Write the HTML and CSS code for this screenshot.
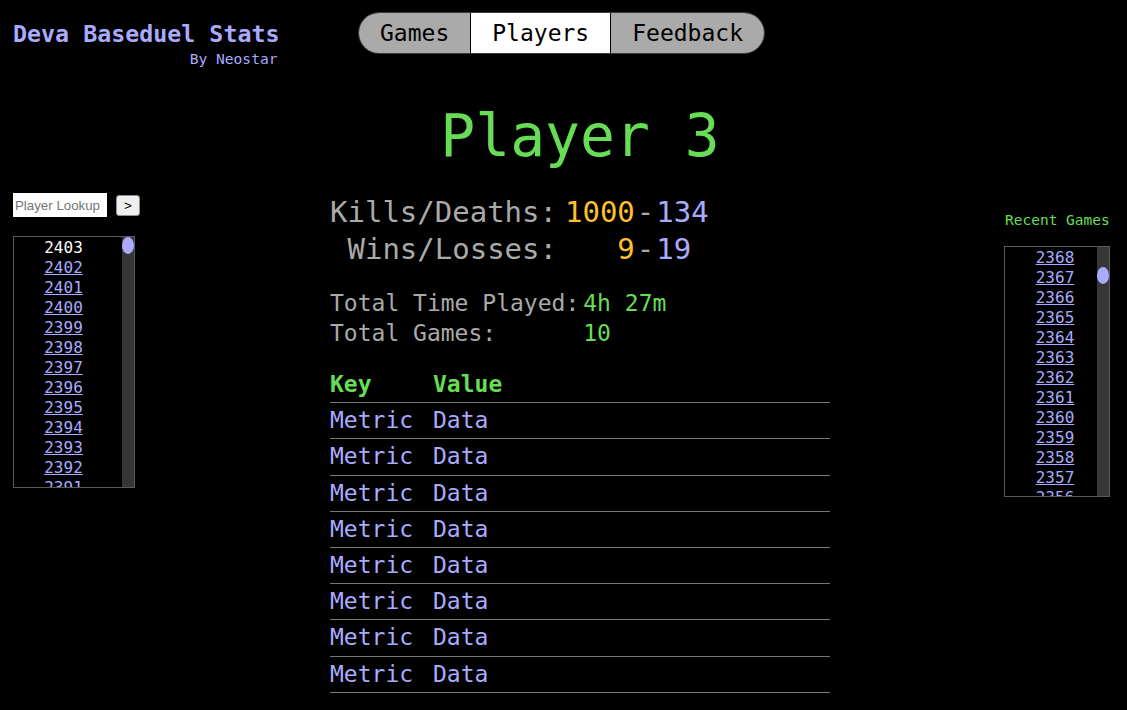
FILE: index.html
```html
<!DOCTYPE html>
<html lang="en">
<head>
<meta charset="utf-8">
<title>Deva Baseduel Stats</title>
<link rel="stylesheet" href="styles.css">
</head>
<body>
<header class="top">
  <div class="brand">
    <div class="brand-title">Deva Baseduel Stats</div>
    <div class="brand-sub">By Neostar</div>
  </div>
  <nav class="tabs">
    <a class="tab">Games</a>
    <a class="tab tab-active">Players</a>
    <a class="tab">Feedback</a>
  </nav>
  <div></div>
</header>

<div class="layout">
  <aside class="side side-left">
    <div class="lookup">
      <input class="lookup-input" type="text" placeholder="Player Lookup">
      <button class="lookup-btn">&gt;</button>
    </div>
    <div class="list list-left">
      <div class="list-items">
        <span class="list-item list-current">2403</span>
        <a class="list-item" href="#2402">2402</a>
        <a class="list-item" href="#2401">2401</a>
        <a class="list-item" href="#2400">2400</a>
        <a class="list-item" href="#2399">2399</a>
        <a class="list-item" href="#2398">2398</a>
        <a class="list-item" href="#2397">2397</a>
        <a class="list-item" href="#2396">2396</a>
        <a class="list-item" href="#2395">2395</a>
        <a class="list-item" href="#2394">2394</a>
        <a class="list-item" href="#2393">2393</a>
        <a class="list-item" href="#2392">2392</a>
        <a class="list-item" href="#2391">2391</a>
      </div>
      <div class="scroll-track"><div class="scroll-thumb"></div></div>
    </div>
  </aside>

  <main class="center">
    <h1 class="player-name">Player 3</h1>
    <div class="content">
      <div class="kd">
        <span class="kd-label">Kills/Deaths:</span>
        <span class="kd-num kd-a">1000</span>
        <span class="kd-dash">-</span>
        <span class="kd-b">134</span>
        <span class="kd-label">Wins/Losses:</span>
        <span class="kd-num kd-a">9</span>
        <span class="kd-dash">-</span>
        <span class="kd-b">19</span>
      </div>
      <div class="totals">
        <span class="tot-label">Total Time Played:</span>
        <span class="tot-val">4h 27m</span>
        <span class="tot-label">Total Games:</span>
        <span class="tot-val">10</span>
      </div>
      <table class="metrics">
        <thead>
          <tr><th class="col-key">Key</th><th>Value</th></tr>
        </thead>
        <tbody>
          <tr><td>Metric</td><td>Data</td></tr>
          <tr><td>Metric</td><td>Data</td></tr>
          <tr><td>Metric</td><td>Data</td></tr>
          <tr><td>Metric</td><td>Data</td></tr>
          <tr><td>Metric</td><td>Data</td></tr>
          <tr><td>Metric</td><td>Data</td></tr>
          <tr><td>Metric</td><td>Data</td></tr>
          <tr><td>Metric</td><td>Data</td></tr>
        </tbody>
      </table>
    </div>
  </main>

  <aside class="side side-right">
    <div class="recent-title">Recent Games</div>
    <div class="list list-right">
      <div class="list-items">
        <a class="list-item" href="#2368">2368</a>
        <a class="list-item" href="#2367">2367</a>
        <a class="list-item" href="#2366">2366</a>
        <a class="list-item" href="#2365">2365</a>
        <a class="list-item" href="#2364">2364</a>
        <a class="list-item" href="#2363">2363</a>
        <a class="list-item" href="#2362">2362</a>
        <a class="list-item" href="#2361">2361</a>
        <a class="list-item" href="#2360">2360</a>
        <a class="list-item" href="#2359">2359</a>
        <a class="list-item" href="#2358">2358</a>
        <a class="list-item" href="#2357">2357</a>
        <a class="list-item" href="#2356">2356</a>
      </div>
      <div class="scroll-track"><div class="scroll-thumb thumb-scrolled"></div></div>
    </div>
  </aside>
</div>
</body>
</html>
```

FILE: styles.css
```css
html, body {
  margin: 0;
  padding: 0;
  background: #000;
}
body {
  font-family: "DejaVu Sans Mono", monospace;
  color: #aaaaaa;
  width: 1127px;
  overflow: hidden;
}

/* header */
.top {
  display: grid;
  grid-template-columns: 1fr auto 1fr;
  align-items: start;
  padding: 12px 17px 0 13px;
  height: 55px;
}
.brand {
  justify-self: start;
  display: flex;
  flex-direction: column;
  align-items: flex-end;
  padding-top: 8px;
}
.brand-title {
  font-weight: bold;
  font-size: 23.3px;
  line-height: 27px;
  color: #aaaaff;
}
.brand-sub {
  font-size: 14.6px;
  line-height: 17px;
  margin-top: 3px;
  margin-right: 2px;
  color: #aaaaff;
}
.tabs {
  display: flex;
  border: 1px solid #3a3a3a;
  border-radius: 21px;
  overflow: hidden;
}
.tab {
  display: block;
  padding: 0 21px;
  height: 40px;
  line-height: 40px;
  font-size: 23px;
  color: #000;
  background: #aaaaaa;
}
.tab + .tab {
  border-left: 1px solid #000;
}
.tab-active {
  background: #fff;
}

/* layout */
.layout {
  display: flex;
  align-items: flex-start;
}
.side-left {
  width: 156px;
  box-sizing: border-box;
  padding: 126px 0 0 13px;
}
.side-right {
  width: 123px;
  box-sizing: border-box;
  padding: 145px 17px 0 0;
}
.center {
  flex: 1;
  display: flex;
  flex-direction: column;
  align-items: center;
}

/* lookup */
.lookup {
  display: flex;
  align-items: center;
  gap: 9px;
}
.lookup-input {
  width: 94px;
  height: 24px;
  box-sizing: border-box;
  border: none;
  padding: 0 2px;
  margin: 0;
  background: #fff;
  font-family: "Liberation Sans", Arial, sans-serif;
  font-size: 13.3px;
  color: #000;
  outline: none;
}
.lookup-input::placeholder {
  color: #757575;
}
.lookup-btn {
  width: 24px;
  height: 21px;
  box-sizing: border-box;
  margin: 0;
  padding: 0;
  background: #efefef;
  border: 1px solid #8f8f8f;
  border-radius: 3px;
  font-family: "Liberation Sans", Arial, sans-serif;
  font-size: 13.3px;
  color: #000;
}

/* lists with a drawn scrollbar */
.list {
  display: flex;
  height: 252px;
  box-sizing: border-box;
  border: 1px solid #5a5a5a;
  overflow: hidden;
}
.list-left {
  width: 122px;
  margin-top: 19px;
}
.list-left .list-items {
  padding-right: 9px;
}
.list-right {
  width: 106px;
  height: 251px;
  margin-top: 17px;
}
.list-right .list-items {
  padding-left: 8px;
}
.list-items {
  flex: 1;
  min-width: 0;
  overflow: hidden;
  padding-top: 1px;
}
.scroll-track {
  width: 12px;
  flex: none;
  background: #363636;
}
.scroll-thumb {
  height: 17px;
  border-radius: 50%;
  background: #aaaaff;
}
.thumb-scrolled {
  margin-top: 20px;
}
.list-item {
  display: block;
  text-align: center;
  font-size: 16px;
  line-height: 20px;
  height: 20px;
  color: #aaaaff;
  text-decoration: underline;
}
.list-current {
  color: #fff;
  text-decoration: none;
}
.recent-title {
  font-size: 14.5px;
  line-height: 17px;
  color: #66dd55;
  padding-left: 1px;
}

/* center */
.player-name {
  margin: 36px 0 0;
  font-size: 58px;
  line-height: 67px;
  font-weight: normal;
  color: #66dd55;
}
.content {
  width: 500px;
}
.kd {
  display: grid;
  grid-template-columns: auto auto auto auto;
  justify-content: start;
  column-gap: 2px;
  margin-top: 24px;
  font-size: 29px;
  line-height: 37px;
}
.kd-label {
  text-align: right;
  padding-right: 6px;
  color: #aaaaaa;
}
.kd-num {
  text-align: right;
}
.kd-a {
  color: #ffc12a;
}
.kd-dash {
  color: #aaaaaa;
}
.kd-b {
  color: #aaaaff;
}
.totals {
  display: grid;
  grid-template-columns: auto auto;
  justify-content: start;
  column-gap: 4px;
  margin-top: 20px;
  font-size: 23px;
  line-height: 30px;
}
.tot-label {
  color: #aaaaaa;
}
.tot-val {
  color: #66dd55;
}
.metrics {
  width: 500px;
  margin-top: 19px;
  border-collapse: collapse;
  font-size: 23px;
  line-height: 27px;
}
.metrics th,
.metrics td {
  text-align: left;
  padding: 4.1px 0;
  border-bottom: 1px solid #777;
}
.metrics th {
  color: #66dd55;
  font-weight: bold;
}
.metrics td {
  color: #aaaaff;
}
.col-key {
  width: 103px;
}
```
